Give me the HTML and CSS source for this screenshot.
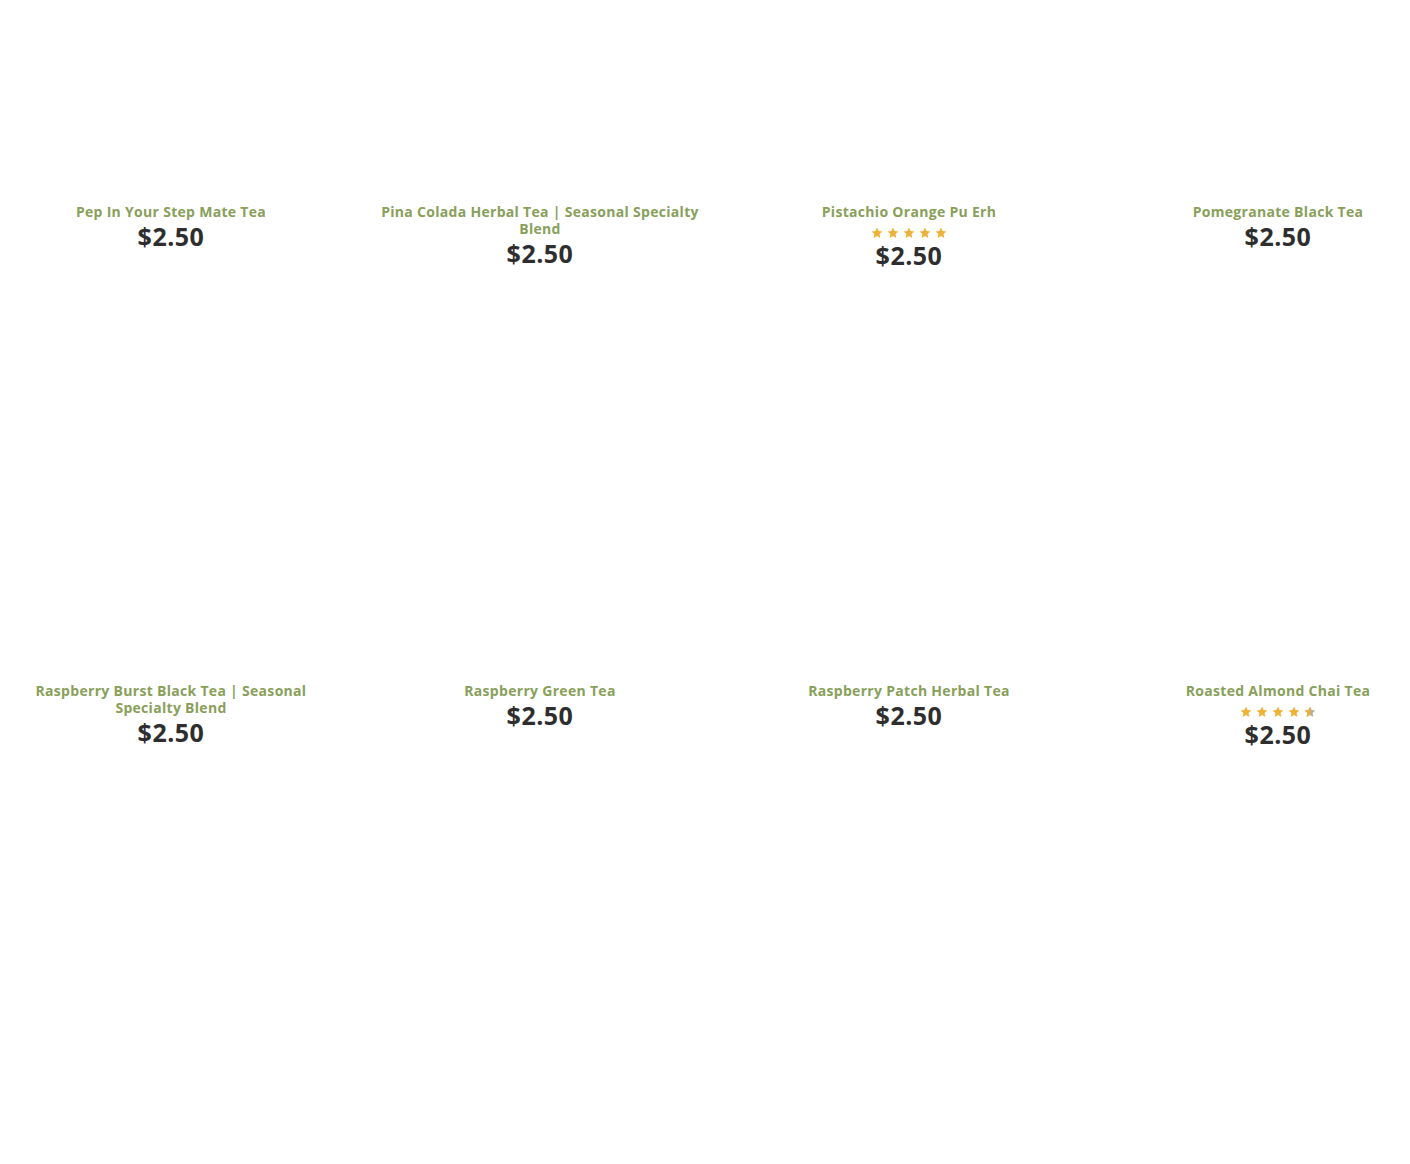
FILE: index.html
```html
<!DOCTYPE html>
<html lang="en">
<head>
<meta charset="utf-8">
<title>Tea Products</title>
<link rel="stylesheet" href="styles.css">
</head>
<body>
<svg width="0" height="0" class="defs" aria-hidden="true">
  <defs>
    <symbol id="star" viewBox="0 0 24 24">
      <polygon points="12,1.2 15.2,8.2 22.8,9 17.1,14.2 18.7,21.8 12,17.9 5.3,21.8 6.9,14.2 1.2,9 8.8,8.2"/>
    </symbol>
    <clipPath id="halfclip"><rect x="0" y="0" width="12.5" height="24"/></clipPath>
  </defs>
</svg>
<div class="viewport">
  <div class="grid">
    <div class="card">
      <div class="thumb"></div>
      <div class="info">
        <a class="title">Pep In Your Step Mate Tea</a>
        <div class="meta"><div class="price">$2.50</div></div>
      </div>
    </div>
    <div class="card">
      <div class="thumb"></div>
      <div class="info">
        <a class="title">Pina Colada Herbal Tea | Seasonal Specialty Blend</a>
        <div class="meta"><div class="price">$2.50</div></div>
      </div>
    </div>
    <div class="card">
      <div class="thumb"></div>
      <div class="info">
        <a class="title">Pistachio Orange Pu Erh</a>
        <div class="meta">
          <div class="rating">
            <svg class="star" viewBox="0 0 24 24"><use href="#star"/></svg>
            <svg class="star" viewBox="0 0 24 24"><use href="#star"/></svg>
            <svg class="star" viewBox="0 0 24 24"><use href="#star"/></svg>
            <svg class="star" viewBox="0 0 24 24"><use href="#star"/></svg>
            <svg class="star" viewBox="0 0 24 24"><use href="#star"/></svg>
          </div>
          <div class="price">$2.50</div>
        </div>
      </div>
    </div>
    <div class="card">
      <div class="thumb"></div>
      <div class="info">
        <a class="title">Pomegranate Black Tea</a>
        <div class="meta"><div class="price">$2.50</div></div>
      </div>
    </div>

    <div class="card">
      <div class="thumb"></div>
      <div class="info">
        <a class="title">Raspberry Burst Black Tea | Seasonal Specialty Blend</a>
        <div class="meta"><div class="price">$2.50</div></div>
      </div>
    </div>
    <div class="card">
      <div class="thumb"></div>
      <div class="info">
        <a class="title">Raspberry Green Tea</a>
        <div class="meta"><div class="price">$2.50</div></div>
      </div>
    </div>
    <div class="card">
      <div class="thumb"></div>
      <div class="info">
        <a class="title">Raspberry Patch Herbal Tea</a>
        <div class="meta"><div class="price">$2.50</div></div>
      </div>
    </div>
    <div class="card">
      <div class="thumb"></div>
      <div class="info">
        <a class="title">Roasted Almond Chai Tea</a>
        <div class="meta">
          <div class="rating">
            <svg class="star" viewBox="0 0 24 24"><use href="#star"/></svg>
            <svg class="star" viewBox="0 0 24 24"><use href="#star"/></svg>
            <svg class="star" viewBox="0 0 24 24"><use href="#star"/></svg>
            <svg class="star" viewBox="0 0 24 24"><use href="#star"/></svg>
            <svg class="star half" viewBox="0 0 24 24">
              <use href="#star" class="star-empty"/>
              <g clip-path="url(#halfclip)"><use href="#star"/></g>
            </svg>
          </div>
          <div class="price">$2.50</div>
        </div>
      </div>
    </div>

    <div class="card"><div class="thumb"></div></div>
    <div class="card"><div class="thumb"></div></div>
    <div class="card"><div class="thumb"></div></div>
    <div class="card"><div class="thumb"></div></div>
  </div>
</div>
</body>
</html>
```

FILE: styles.css
```css
html, body {
  margin: 0;
  padding: 0;
  background: #ffffff;
  overflow: hidden;
}

.defs {
  position: absolute;
  width: 0;
  height: 0;
}

.viewport {
  width: 1410px;
  height: 1164px;
  overflow: hidden;
}

.grid {
  display: grid;
  grid-template-columns: repeat(4, 339px);
  column-gap: 30px;
  row-gap: 59px;
  margin-top: -152px;
  margin-left: 1.5px;
  width: 1446px;
}

.card {
  display: flex;
  flex-direction: column;
  align-items: center;
  padding: 0 4px;
}

.thumb {
  width: 100%;
  height: 340px;
  background: #ffffff;
}

.info {
  margin-top: 15px;
  display: flex;
  flex-direction: column;
  align-items: center;
  text-align: center;
  width: 100%;
}

.title {
  font-family: "Open Sans", "Liberation Sans", sans-serif;
  font-weight: 700;
  font-size: 14px;
  line-height: 17px;
  color: #88a05a;
  text-decoration: none;
  letter-spacing: 0.3px;
}

.meta {
  margin-top: 3px;
  display: flex;
  flex-direction: column;
  align-items: center;
}

.rating {
  height: 19px;
  display: flex;
  align-items: center;
  justify-content: center;
  gap: 4px;
  padding-top: 1px;
  box-sizing: border-box;
}

.star {
  width: 12px;
  height: 12px;
  display: block;
  fill: #eeb336;
}

.star .star-empty {
  fill: #b8ae98;
}

.price {
  font-family: "Open Sans", "Liberation Sans", sans-serif;
  font-weight: 700;
  font-size: 25px;
  line-height: 26px;
  color: #2e2e2e;
  letter-spacing: 0.5px;
}
```
